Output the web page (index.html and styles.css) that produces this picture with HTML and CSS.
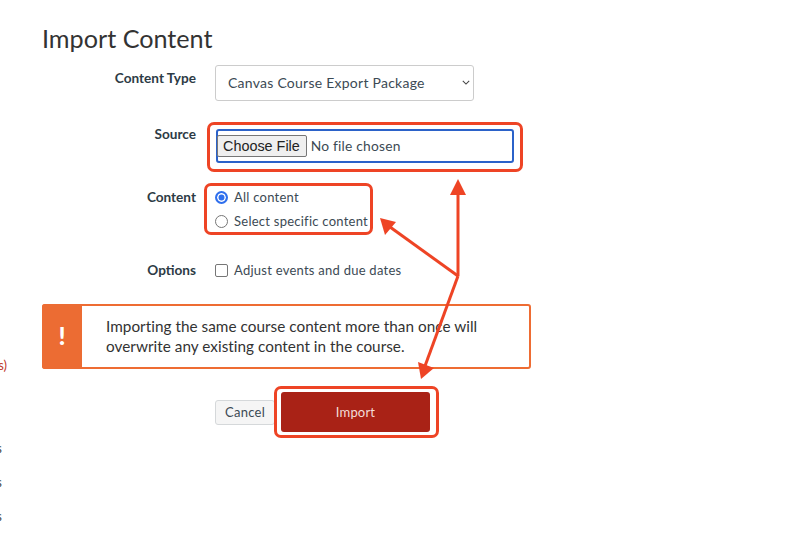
FILE: index.html
```html
<!DOCTYPE html>
<html lang="en">
<head>
<meta charset="utf-8">
<title>Import Content</title>
<link rel="stylesheet" href="styles.css">
</head>
<body>
<div class="page">
  <aside class="rail">
    <span class="rail-item rail-err">(errors)</span>
    <span class="rail-item rail-a">items</span>
    <span class="rail-item rail-b">items</span>
    <span class="rail-item rail-b">items</span>
  </aside>
  <main class="main">
    <h1 class="title">Import Content</h1>
    <form class="form">
      <div class="row row-type">
        <span class="label">Content Type</span>
        <div class="select">
          <span>Canvas Course Export Package</span>
          <svg class="chev" viewBox="0 0 10 6" width="8" height="5"><path d="M1 1l4 4 4-4" fill="none" stroke="#444" stroke-width="1.3"/></svg>
        </div>
      </div>
      <div class="row row-source">
        <span class="label">Source</span>
        <div class="file">
          <span class="file-btn">Choose File</span>
          <span class="file-text">No file chosen</span>
        </div>
      </div>
      <div class="row row-content">
        <span class="label">Content</span>
        <div class="choices">
          <div class="choice"><span class="radio radio-on"></span>All content</div>
          <div class="choice"><span class="radio"></span>Select specific content</div>
        </div>
      </div>
      <div class="row row-options">
        <span class="label">Options</span>
        <div class="choice"><span class="check"></span>Adjust events and due dates</div>
      </div>
    </form>
    <div class="alert">
      <div class="alert-icon">!</div>
      <p class="alert-text">Importing the same course content more than once will overwrite any existing content in the course.</p>
    </div>
    <div class="actions">
      <span class="btn-cancel">Cancel</span>
      <span class="btn-import">Import</span>
    </div>
  </main>
</div>
<div class="mark mark-source"></div>
<div class="mark mark-content"></div>
<div class="mark mark-import"></div>
<svg class="arrows" viewBox="0 0 800 543" width="800" height="543">
  <g fill="none" stroke="#ee4425" stroke-width="3">
    <path d="M458 193V276"/>
    <path d="M390 227L458 276"/>
    <path d="M458 276L425 366"/>
  </g>
  <g fill="#ee4425">
    <path d="M458 179L466 195H450Z"/>
    <path d="M380 218L396 222L385 235Z"/>
    <path d="M421 379L418 362L434 368Z"/>
  </g>
</svg>
</body>
</html>
```
FILE: styles.css
```css
* { box-sizing: border-box; }
html, body { margin: 0; height: 100%; background: #fff; overflow: hidden; }
body { font-family: Lato, "Open Sans", sans-serif; color: #2d3b45; }

.page { display: flex; height: 543px; }

.rail { width: 7px; overflow: hidden; flex: none; padding-top: 357px; display: flex; flex-direction: column; align-items: flex-end; font-size: 13px; line-height: 16px; }
.rail-item { white-space: nowrap; color: #444; }
.rail-err { color: #c0392b; }
.rail-a { margin-top: 67px; margin-right: 5px; }
.rail-b { margin-top: 18px; margin-right: 5px; }

.main { margin-left: 35px; width: 489px; }
.title { margin: 23px 0 0; font-size: 25.2px; line-height: 30px; font-weight: 400; color: #333; }

.form { margin-top: 12px; }
.row { display: grid; grid-template-columns: 154px 1fr; column-gap: 19px; }
.label { text-align: right; font-weight: 700; font-size: 13.6px; line-height: 16px; color: #2d3b45; }
.row-type .label { padding-top: 5px; }
.row-source { margin-top: 28px; }
.row-source .label { margin-top: -3px; }
.row-content { margin-top: 26px; }
.row-options { margin-top: 33px; }

.select { width: 259px; height: 36px; border: 1px solid #ccc; border-radius: 3px; padding: 0 3px 2px 12px; display: flex; align-items: center; justify-content: space-between; font-size: 14px; color: #3c4a54; letter-spacing: .25px; }
.chev { display: block; }

.file { width: 298px; height: 34px; margin-left: 1px; border: 2px solid #2b62c9; border-radius: 3px; display: flex; align-items: center; font-family: "Liberation Sans", Arial, sans-serif; font-size: 14.4px; color: #222; }
.file-btn { height: 22px; padding: 0 6px 0 5px; line-height: 20px; background: #efefef; border: 1px solid #767676; border-radius: 2px; margin-left: -1px; }
.file-text { margin-left: 4px; margin-top: -2px; font-family: Lato, sans-serif; font-size: 13.8px; color: #3c4a54; letter-spacing: .2px; }

.choices { display: flex; flex-direction: column; gap: 8px; }
.choice { display: flex; align-items: center; font-size: 13px; line-height: 16px; color: #3c4a54; letter-spacing: .25px; }

.radio { width: 13px; height: 13px; margin-right: 6px; border: 1px solid #767676; border-radius: 50%; flex: none; background: #fff; }
.radio-on { border: 2px solid #2f6fed; box-shadow: inset 0 0 0 1.5px #fff; background: #2f6fed; }
.check { width: 13px; height: 13px; margin-right: 6px; border: 1px solid #767676; border-radius: 2px; flex: none; }

.alert { margin-top: 26px; height: 65px; display: flex; border: 2px solid #ee6c33; border-radius: 3px; }
.alert-icon { width: 40px; margin: -2px 0 -2px -2px; background: #ec6c33; border-radius: 3px 0 0 3px; color: #fff; font-weight: 900; font-size: 25px; display: flex; align-items: center; justify-content: center; flex: none; padding-bottom: 3px; }
.alert-text { margin: 10px 0 0 24px; width: 385px; font-size: 15.3px; line-height: 20px; letter-spacing: .03px; color: #333; }

.actions { margin: 23px 0 0 173px; display: flex; align-items: center; gap: 6px; }
.btn-cancel { width: 60px; height: 25px; border: 1px solid #d5d8da; border-radius: 3px; background: #f5f5f5; font-size: 13px; line-height: 22px; text-align: center; color: #3c4a54; letter-spacing: .25px; }
.btn-import { width: 149px; height: 40px; background: #a92216; border-radius: 3px; color: #f4dcd8; font-size: 13px; line-height: 41px; text-align: center; letter-spacing: .2px; }

.mark { position: absolute; border: 3px solid #ee4425; border-radius: 7px; }
.mark-source { left: 207px; top: 122px; width: 316px; height: 50px; }
.mark-content { left: 204px; top: 183px; width: 169px; height: 52px; }
.mark-import { left: 274px; top: 386px; width: 165px; height: 52px; }
.arrows { position: absolute; left: 0; top: 0; pointer-events: none; }
```
